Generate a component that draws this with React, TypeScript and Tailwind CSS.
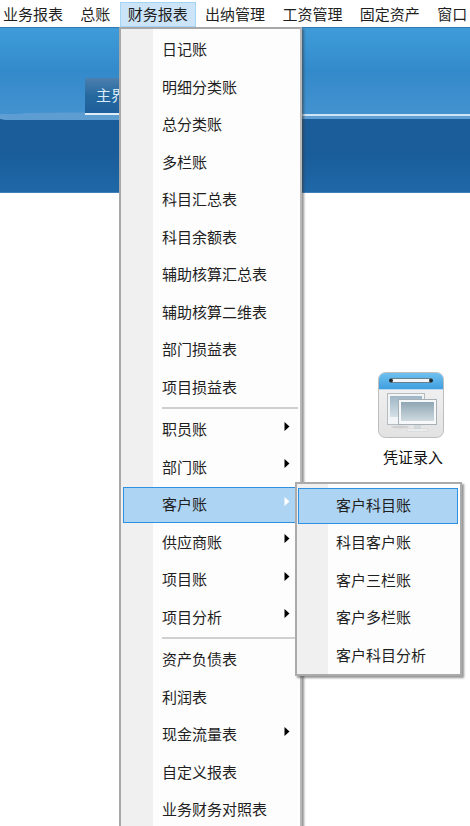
const font = { fontFamily: '"Noto Sans CJK SC", "Noto Sans", sans-serif' };

function Arrow({ white }: { white?: boolean }) {
  return (
    <svg className="absolute left-[161px] top-[11px]" width="6" height="9" viewBox="0 0 6 9">
      <path d="M0.5 0 L5.5 4.5 L0.5 9 Z" fill={white ? "#ffffff" : "#000000"} />
    </svg>
  );
}

function Row({ label, arrow, active }: { label: string; arrow?: boolean; active?: boolean }) {
  return (
    <div className="relative h-[37.5px] flex items-center pl-[39px] text-[15px] text-[#1f1f1f]">
      {active ? (
        <div className="absolute inset-x-0 top-[1.5px] bottom-0 bg-[#aed4f4] border border-[#2f8fe0]" />
      ) : null}
      <span className="relative">{label}</span>
      {arrow ? <Arrow white={active} /> : null}
    </div>
  );
}

function Sep() {
  return (
    <div className="h-[5px] pl-[39px] flex items-center">
      <div className="h-[2px] w-full bg-[#d0d0d0]" />
    </div>
  );
}

function VoucherIcon() {
  return (
    <svg width="66" height="66" viewBox="0 0 66 66">
      <defs>
        <linearGradient id="body" x1="0" y1="0" x2="0" y2="1">
          <stop offset="0" stopColor="#f4f4f4" />
          <stop offset="1" stopColor="#e2e2e2" />
        </linearGradient>
        <linearGradient id="head" x1="0" y1="0" x2="0" y2="1">
          <stop offset="0" stopColor="#6fc0ee" />
          <stop offset="1" stopColor="#3f9fe0" />
        </linearGradient>
        <linearGradient id="screen" x1="0" y1="0" x2="0" y2="1">
          <stop offset="0" stopColor="#8fa6b3" />
          <stop offset="1" stopColor="#cfdae0" />
        </linearGradient>
        <linearGradient id="screen2" x1="0" y1="0" x2="0" y2="1">
          <stop offset="0" stopColor="#9db6c6" />
          <stop offset="1" stopColor="#d5e0e6" />
        </linearGradient>
      </defs>
      <rect x="0.5" y="0.5" width="65" height="65" rx="7" fill="url(#body)" stroke="#bdbdbd" />
      <path d="M1 17 V7 a6 6 0 0 1 6-6 H59 a6 6 0 0 1 6 6 V17 Z" fill="url(#head)" />
      <rect x="1" y="17" width="64" height="1" fill="#b6d9ef" />
      <rect x="12" y="6.5" width="42" height="4" rx="2" fill="#f3f6f8" stroke="#5a6a74" strokeWidth="0.8" />
      <circle cx="13" cy="8.5" r="2" fill="#1f2a31" />
      <circle cx="53" cy="8.5" r="2" fill="#1f2a31" />
      <rect x="9.5" y="21.5" width="37" height="31" fill="#f2f4f5" stroke="#b4bcc2" />
      <rect x="12" y="24" width="32" height="21" fill="url(#screen2)" />
      <ellipse cx="22" cy="55" rx="9" ry="1.5" fill="#cfcfcf" />
      <rect x="20.5" y="27.5" width="38" height="25" fill="#f6f8f9" stroke="#a7b0b6" />
      <rect x="23" y="30" width="33" height="19" fill="url(#screen)" />
      <rect x="36" y="53" width="7" height="4" fill="#d3d8db" />
      <rect x="29" y="57" width="21" height="2" fill="#f8f8f8" stroke="#c4c8ca" strokeWidth="0.5" />
    </svg>
  );
}

const topItems = ["业务报表", "总账", "财务报表", "出纳管理", "工资管理", "固定资产", "窗口"];
const group1 = ["日记账", "明细分类账", "总分类账", "多栏账", "科目汇总表", "科目余额表", "辅助核算汇总表", "辅助核算二维表", "部门损益表", "项目损益表"];
const group2 = ["职员账", "部门账", "客户账", "供应商账", "项目账", "项目分析"];
const group3 = ["资产负债表", "利润表", "现金流量表", "自定义报表", "业务财务对照表"];
const sub = ["客户科目账", "科目客户账", "客户三栏账", "客户多栏账", "客户科目分析"];

export default function App() {
  return (
    <div className="relative w-[470px] h-[826px] overflow-hidden bg-white" style={font}>
      <div className="h-[27px] flex items-center pt-[2px] -ml-[5px] bg-white relative z-10 text-[15px] text-[#1f1f1f] whitespace-nowrap">
        {topItems.map((t) => (
          <div
            key={t}
            className={
              "h-[25px] flex items-center px-[7px] mr-[1.35px] border " +
              (t === "财务报表" ? "bg-[#cce4f8] border-[#a6d4f5]" : "border-transparent")
            }
          >
            {t}
          </div>
        ))}
      </div>

      <div className="relative h-[166px] flex flex-col border-t border-[#2f7ab4]">
        <svg className="absolute left-0 top-[83px]" width="119" height="9" viewBox="0 0 119 9">
          <path d="M0 9 C8 8 14 3 26 2 L119 1 V9 Z" fill="#5d9dd2" />
        </svg>
        <div className="h-[86px] bg-gradient-to-b from-[#3f9cd9] via-[#338aca] to-[#4392d0] pl-[85px] pt-[50px] shrink-0">
          <div className="relative w-[70px] h-[37px] rounded-t-[2px] bg-gradient-to-b from-[#4b7fae] via-[#25699f] to-[#1f5f9c] border-b-2 border-[#e0edf8] flex items-center pl-[11px] text-[15px] text-[#dcebf9]">
            主界面
          </div>
        </div>
        <div className="flex shrink-0 h-[2px]">
          <div className="w-[119px] bg-[#5d9dd2]" />
          <div className="flex-1 bg-[#cfe5f5]" />
        </div>
        <div className="h-[3px] bg-[#5f9fd4] shrink-0" />
        <div className="flex-1 bg-gradient-to-b from-[#1b5d9a] via-[#1a5d9b] to-[#1f68a8] border-b border-[#3f80b8]" />
      </div>

      <div className="pl-[378px] pt-[179px] w-[470px]">
        <div className="w-[66px] flex flex-col items-center">
          <VoucherIcon />
          <div className="mt-[8px] ml-[4px] text-[15px] text-[#111] whitespace-nowrap">凭证录入</div>
        </div>
      </div>

      {/* dropdown menu */}
      <div className="absolute z-20 left-[119px] top-[27px] w-[183px] h-[830px] bg-[#fdfdfd] border-2 border-[#a8a8a8] border-r-[#b8b8b8] pt-[1.5px] px-[2px] shadow-[2px_2px_2px_rgba(60,60,60,0.55)]">
        <div className="absolute left-0 top-0 bottom-0 w-[32px] bg-[#f0f0f0]" />
        <div className="relative">
          {group1.map((t) => <Row key={t} label={t} />)}
          <Sep />
          {group2.map((t) => (
            <Row key={t} label={t} arrow active={t === "客户账"} />
          ))}
          <Sep />
          {group3.map((t) => <Row key={t} label={t} arrow={t === "现金流量表"} />)}
        </div>
      </div>

      {/* submenu */}
      <div className="absolute z-30 left-[295px] top-[482px] w-[167px] h-[194px] bg-[#fdfdfd] border-2 border-[#ababab] pl-[1px] pr-[2px] pt-[2.25px] shadow-[2px_2px_2px_rgba(60,60,60,0.55)]">
        <div className="absolute left-0 top-0 bottom-0 w-[31px] bg-[#f0f0f0]" />
        <div className="relative">
          {sub.map((t, i) => (
            <div key={t} className="relative h-[37.5px] flex items-center pl-[38px] text-[15px] text-[#1f1f1f]">
              {i === 0 ? (
                <div className="absolute inset-x-0 top-[1.75px] bottom-0 bg-[#aed4f4] border border-[#2f8fe0]" />
              ) : null}
              <span className="relative">{t}</span>
            </div>
          ))}
        </div>
      </div>
    </div>
  );
}
